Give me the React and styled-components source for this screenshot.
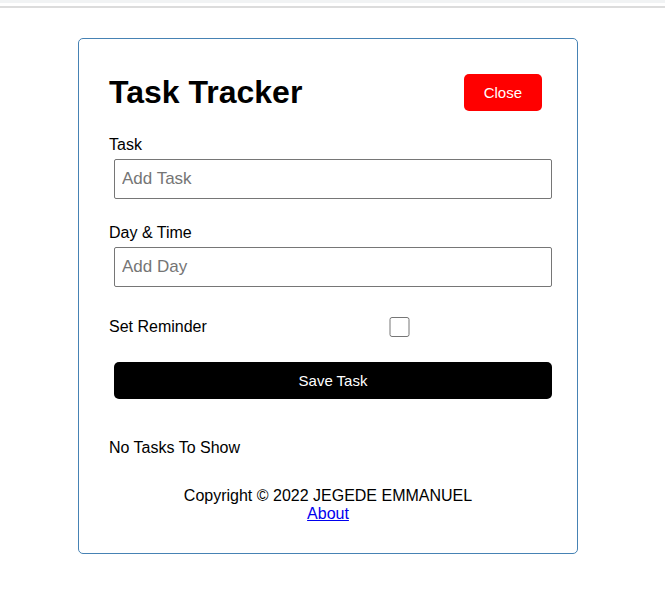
import React from "react";
import styled, { createGlobalStyle } from "styled-components";

const GlobalStyle = createGlobalStyle`
  * {
    box-sizing: border-box;
    margin: 0;
    padding: 0;
  }

  body {
    font-family: "Liberation Sans", Arial, sans-serif;
    background: #fff;
  }
`;

const TopStrip = styled.div`
  height: 8px;
  border-top: 3px solid #f1f3f4;
  border-bottom: 2px solid #dcdcdc;
`;

const Page = styled.div`
  width: 656px;
`;

const Container = styled.div`
  max-width: 500px;
  margin: 30px auto;
  min-height: 300px;
  border: 1px solid steelblue;
  padding: 30px;
  border-radius: 5px;
  overflow: auto;
`;

const Header = styled.header`
  display: flex;
  justify-content: space-between;
  align-items: center;
  margin-bottom: 20px;

  h1 {
    font-size: 32px;
    font-weight: bold;
  }
`;

const Button = styled.button`
  display: ${(p) => (p.$block ? "block" : "inline-block")};
  width: ${(p) => (p.$block ? "100%" : "auto")};
  background: ${(p) => p.$color || "black"};
  color: #fff;
  border: none;
  padding: 10px 20px;
  margin: 5px;
  border-radius: 5px;
  cursor: pointer;
  font-size: 15px;
  font-family: inherit;
`;

const AddForm = styled.form`
  margin-bottom: 40px;
`;

const FormControl = styled.div`
  margin: 20px 0;

  label {
    display: block;
    font-size: 16px;
  }

  input {
    width: 100%;
    height: 40px;
    margin: 5px;
    padding: 3px 7px;
    font-size: 17px;
    font-family: inherit;
    border: 1px solid #767676;
    border-radius: 2px;
  }

  input::placeholder {
    color: #757575;
  }
`;

const CheckControl = styled(FormControl)`
  display: flex;
  align-items: center;
  justify-content: space-between;

  label {
    flex: 1;
  }

  input {
    flex: 2;
    height: 20px;
  }
`;

const Empty = styled.div`
  font-size: 16px;
`;

const Footer = styled.footer`
  margin-top: 30px;
  text-align: center;
  font-size: 16px;

  a {
    color: #0000ee;
  }
`;

const App = () => {
  return (
    <>
      <GlobalStyle />
      <TopStrip />
      <Page>
        <Container>
          <Header>
            <h1>Task Tracker</h1>
            <Button $color="red">Close</Button>
          </Header>
          <AddForm onSubmit={(e) => e.preventDefault()}>
            <FormControl>
              <label>Task</label>
              <input type="text" placeholder="Add Task" />
            </FormControl>
            <FormControl>
              <label>Day &amp; Time</label>
              <input type="text" placeholder="Add Day" />
            </FormControl>
            <CheckControl>
              <label>Set Reminder</label>
              <input type="checkbox" />
            </CheckControl>
            <Button type="submit" $block>
              Save Task
            </Button>
          </AddForm>
          <Empty>No Tasks To Show</Empty>
          <Footer>
            <p>Copyright &copy; 2022 JEGEDE EMMANUEL</p>
            <a href="#about">About</a>
          </Footer>
        </Container>
      </Page>
    </>
  );
};

export default App;
